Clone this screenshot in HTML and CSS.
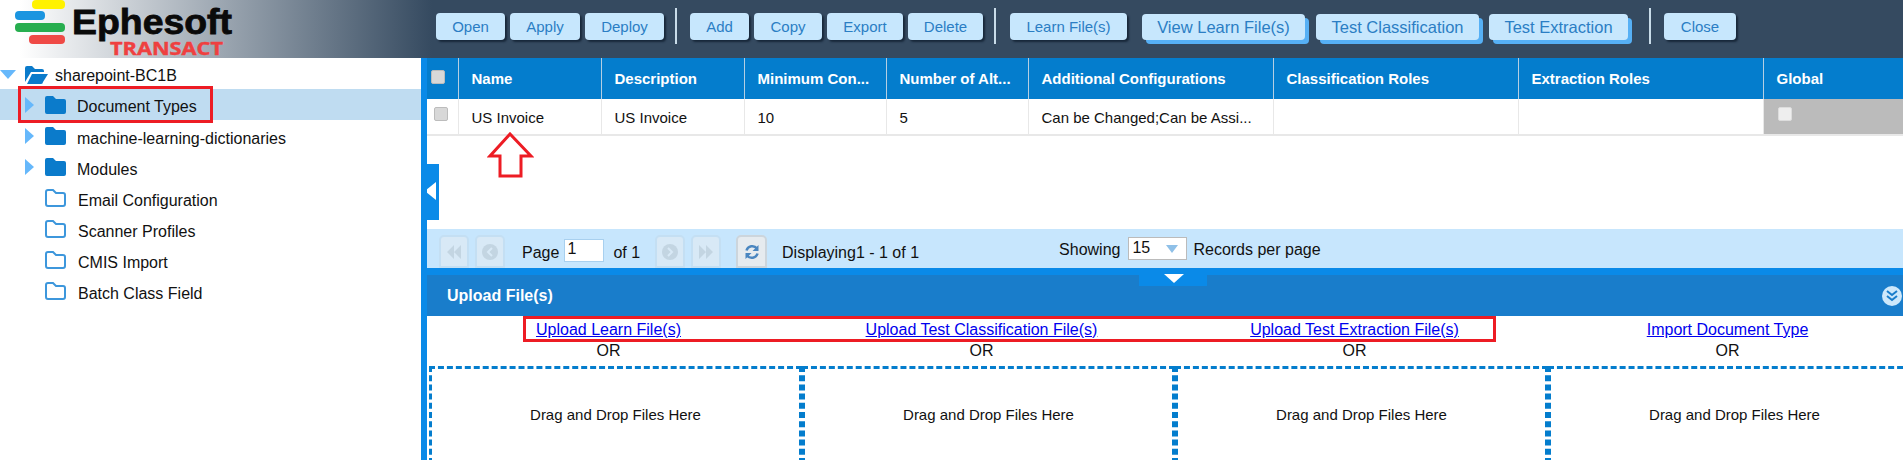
FILE: index.html
```html
<!DOCTYPE html>
<html lang="en">
<head>
<meta charset="utf-8">
<title>Ephesoft Transact</title>
<link rel="stylesheet" href="styles.css">
</head>
<body>
<div class="app">
  <header class="header">
    <svg class="logo" width="240" height="58" viewBox="0 0 240 58">
      <rect x="32" y="0" width="33" height="9" rx="4" fill="#fff200"/>
      <rect x="15" y="11" width="30" height="9" rx="4" fill="#1b95e0"/>
      <rect x="15" y="23" width="50" height="9" rx="4" fill="#27ae4f"/>
      <rect x="29" y="35" width="36" height="9" rx="4" fill="#ef4a46"/>
      <text x="72" y="34" class="logo-main" textLength="160" lengthAdjust="spacingAndGlyphs">Ephesoft</text>
      <text x="110" y="55" class="logo-sub" textLength="113" lengthAdjust="spacingAndGlyphs">TRANSACT</text>
    </svg>
    <nav class="toolbar">
      <button class="btn">Open</button>
      <button class="btn">Apply</button>
      <button class="btn">Deploy</button>
      <span class="sep"></span>
      <button class="btn">Add</button>
      <button class="btn">Copy</button>
      <button class="btn">Export</button>
      <button class="btn">Delete</button>
      <span class="sep sep-mid"></span>
      <button class="btn">Learn File(s)</button>
      <button class="btn btn-tab btn-first">View Learn File(s)</button>
      <button class="btn btn-tab">Test Classification</button>
      <button class="btn btn-tab">Test Extraction</button>
      <span class="sep sep-wide"></span>
      <button class="btn">Close</button>
    </nav>
  </header>
  <div class="main">
    <aside class="sidebar">
      <div class="row row-root">
        <svg class="caret-down" width="16" height="9" viewBox="0 0 16 9"><path d="M0 0h16L8 9z"/></svg>
        <svg class="folder-open" width="24" height="18" viewBox="0 0 24 18"><path d="M1 16V2a2 2 0 0 1 2-2h5l3 3h7a2 2 0 0 1 2 2v1H7L1 16z"/><path d="M8 8h16l-5 8a2 2 0 0 1-2 2H3z"/></svg>
        <span>sharepoint-BC1B</span>
      </div>
      <div class="row row-sel row-branch">
        <svg class="caret" width="9" height="16" viewBox="0 0 9 16"><path d="M0 0l9 8-9 8z"/></svg>
        <svg class="folder" width="21" height="18" viewBox="0 0 21 18"><path d="M2 0h6l3 3h8a2 2 0 0 1 2 2v11a2 2 0 0 1-2 2H2a2 2 0 0 1-2-2V2a2 2 0 0 1 2-2z"/></svg>
        <span>Document Types</span>
        <span class="mark-tree"></span>
      </div>
      <div class="row row-branch">
        <svg class="caret" width="9" height="16" viewBox="0 0 9 16"><path d="M0 0l9 8-9 8z"/></svg>
        <svg class="folder" width="21" height="18" viewBox="0 0 21 18"><path d="M2 0h6l3 3h8a2 2 0 0 1 2 2v11a2 2 0 0 1-2 2H2a2 2 0 0 1-2-2V2a2 2 0 0 1 2-2z"/></svg>
        <span>machine-learning-dictionaries</span>
      </div>
      <div class="row row-branch">
        <svg class="caret" width="9" height="16" viewBox="0 0 9 16"><path d="M0 0l9 8-9 8z"/></svg>
        <svg class="folder" width="21" height="18" viewBox="0 0 21 18"><path d="M2 0h6l3 3h8a2 2 0 0 1 2 2v11a2 2 0 0 1-2 2H2a2 2 0 0 1-2-2V2a2 2 0 0 1 2-2z"/></svg>
        <span>Modules</span>
      </div>
      <div class="row row-leaf">
        <svg class="folder-line" width="21" height="18" viewBox="0 0 21 18"><path d="M3 1h5l3 3h7a2 2 0 0 1 2 2v9a2 2 0 0 1-2 2H3a2 2 0 0 1-2-2V3a2 2 0 0 1 2-2z"/></svg>
        <span>Email Configuration</span>
      </div>
      <div class="row row-leaf">
        <svg class="folder-line" width="21" height="18" viewBox="0 0 21 18"><path d="M3 1h5l3 3h7a2 2 0 0 1 2 2v9a2 2 0 0 1-2 2H3a2 2 0 0 1-2-2V3a2 2 0 0 1 2-2z"/></svg>
        <span>Scanner Profiles</span>
      </div>
      <div class="row row-leaf">
        <svg class="folder-line" width="21" height="18" viewBox="0 0 21 18"><path d="M3 1h5l3 3h7a2 2 0 0 1 2 2v9a2 2 0 0 1-2 2H3a2 2 0 0 1-2-2V3a2 2 0 0 1 2-2z"/></svg>
        <span>CMIS Import</span>
      </div>
      <div class="row row-leaf">
        <svg class="folder-line" width="21" height="18" viewBox="0 0 21 18"><path d="M3 1h5l3 3h7a2 2 0 0 1 2 2v9a2 2 0 0 1-2 2H3a2 2 0 0 1-2-2V3a2 2 0 0 1 2-2z"/></svg>
        <span>Batch Class Field</span>
      </div>
    </aside>
    <div class="divider"></div>
    <section class="content">
      <div class="grid-wrap">
        <table class="grid">
          <colgroup>
            <col class="c-check"><col class="c-std"><col class="c-std"><col class="c-std2"><col class="c-std2"><col class="c-wide"><col class="c-wide"><col class="c-wide"><col>
          </colgroup>
          <thead>
            <tr>
              <th class="cell-check"><span class="check check-head"></span></th>
              <th>Name</th><th>Description</th><th>Minimum Con...</th><th>Number of Alt...</th>
              <th>Additional Configurations</th><th>Classification Roles</th><th>Extraction Roles</th><th>Global</th>
            </tr>
          </thead>
          <tbody>
            <tr>
              <td class="cell-check"><span class="check check-row"></span></td>
              <td>US Invoice</td><td>US Invoice</td><td>10</td><td>5</td>
              <td>Can be Changed;Can be Assi...</td><td></td><td></td>
              <td class="cell-global"><span class="check check-global"></span></td>
            </tr>
          </tbody>
        </table>
        <svg class="up-arrow" width="47" height="46" viewBox="0 0 47 46"><path d="M23 2L3 24h10v20h21V24h10z"/></svg>
        <div class="side-handle"><span class="tri-left"></span></div>
      </div>
      <div class="pager">
        <span class="pg-btn"><svg width="16" height="14" viewBox="0 0 16 14"><path d="M8 0v14L1 7zM15 0v14L8 7z"/></svg></span>
        <span class="pg-btn"><svg width="16" height="16" viewBox="0 0 16 16"><circle cx="8" cy="8" r="8"/><path class="pg-chev" d="M10 4L6 8l4 4"/></svg></span>
        <span class="pg-label">Page</span>
        <input class="pg-input" value="1" aria-label="Page">
        <span class="pg-of">of 1</span>
        <span class="pg-btn pg-next"><svg width="16" height="16" viewBox="0 0 16 16"><circle cx="8" cy="8" r="8"/><path class="pg-chev" d="M6 4l4 4-4 4"/></svg></span>
        <span class="pg-btn"><svg width="16" height="14" viewBox="0 0 16 14"><path d="M1 0v14l7-7zM8 0v14l7-7z"/></svg></span>
        <span class="pg-btn pg-refresh"><svg width="16" height="16" viewBox="0 0 16 16"><path class="ref" d="M2.500 6.500A6 6 0 0 1 13 4.500M13.500 9.500A6 6 0 0 1 3 11.500"/><path class="ref-head" d="M14.500 1v6h-6zM1.500 15V9h6z"/></svg></span>
        <span class="pg-display">Displaying1 - 1 of 1</span>
        <span class="pg-show">Showing</span>
        <span class="pg-select">15<i class="sel-tri"></i></span>
        <span class="pg-rec">Records per page</span>
      </div>
      <div class="upload-bar">
        <strong>Upload File(s)</strong>
        <svg class="collapse" width="20" height="20" viewBox="0 0 20 20"><circle cx="10" cy="10" r="10"/><path d="M5 5l5 4 5-4M5 10l5 4 5-4"/></svg>
        <div class="bottom-handle"><span class="tri-down"></span></div>
      </div>
      <div class="links">
        <div class="link-cell"><a href="#">Upload Learn File(s)</a><span>OR</span></div>
        <div class="link-cell"><a href="#">Upload Test Classification File(s)</a><span>OR</span></div>
        <div class="link-cell"><a href="#">Upload Test Extraction File(s)</a><span>OR</span></div>
        <div class="link-cell"><a href="#">Import Document Type</a><span>OR</span></div>
        <span class="mark-links"></span>
      </div>
      <div class="drops">
        <div class="drop">Drag and Drop Files Here</div>
        <div class="drop">Drag and Drop Files Here</div>
        <div class="drop">Drag and Drop Files Here</div>
        <div class="drop">Drag and Drop Files Here</div>
      </div>
    </section>
  </div>
</div>
</body>
</html>
```

FILE: styles.css
```css
* { box-sizing: border-box; }
html, body { margin: 0; height: 460px; overflow: hidden; background: #fff; }
body { font-family: "Liberation Sans", Arial, sans-serif; font-size: 15px; color: #111; }
.app { width: 1903px; height: 460px; overflow: hidden; }

.header { height: 58px; display: flex; background: linear-gradient(to right, #fff 0, #fff 20px, #354a60 432px, #354a60 100%); }
.logo { flex: none; width: 240px; }
.logo-main { font: 700 35px "Liberation Sans", sans-serif; fill: #0a0a0a; stroke: #0a0a0a; stroke-width: 0.8px; }
.logo-sub { font: 700 17px "Open Sans", "Liberation Sans", sans-serif; fill: #ef4040; stroke: #ef4040; stroke-width: 0.4px; }

.toolbar { margin-left: 196px; display: flex; align-items: flex-start; padding-top: 13px; }
.btn { height: 27px; padding: 0; border: 0; border-radius: 4px; background: #c7e7fd; color: #2b7ec4; font: 15px "Liberation Sans", sans-serif; box-shadow: 2px 2px 2px #18283a; margin-right: 5px; }
.btn:nth-child(1) { width: 69px; }
.btn:nth-child(2) { width: 70px; }
.btn:nth-child(3) { width: 79px; }
.btn:nth-child(5) { width: 59px; }
.btn:nth-child(6) { width: 68px; }
.btn:nth-child(7) { width: 76px; }
.btn:nth-child(8) { width: 75px; }
.btn:nth-child(10) { width: 117px; margin-right: 0; }
.btn-tab { margin-top: 1px; height: 26px; width: 163px; margin-right: 11px; box-shadow: 4px 4px 0 #56b0f5; font-size: 16.500px; }
.btn-first { margin-left: 15px; }
.btn:nth-child(12) { width: 163px; margin-right: 10px; }
.btn:nth-child(13) { width: 139px; margin-right: 0; }
.btn:last-child { width: 72px; margin-right: 0; box-shadow: 2px 2px 2px #18283a; }
.sep { width: 2px; height: 36px; margin: -5px 13px 0 6px; background: #c9dce9; }
.sep-mid { margin-right: 14px; }
.sep-wide { margin-left: 21px; margin-right: 13px; }

.main { display: flex; height: 402px; }
.sidebar { flex: none; width: 421px; padding-top: 0; }
.row { height: 31px; display: flex; align-items: center; font-size: 16px; position: relative; }
.row span:not(.mark-tree) { padding-top: 6px; }
.row-root span:not(.mark-tree), .row-sel span:not(.mark-tree) { padding-top: 4px; }
.row-root { padding-left: 0; }
.row-sel { background: #bfdcf1; }
.row-branch { padding-left: 25px; }
.row-leaf { padding-left: 45px; }
.caret-down path, .caret path { fill: #66b8fb; }
.caret-down { margin-right: 8px; margin-top: 2px; }
.folder-open { margin-right: 7px; margin-top: 2px; }
.folder-open path { fill: #0b7bcb; }
.caret { margin-right: 11px; }
.folder { margin-right: 11px; }
.folder path { fill: #0b7bcb; }
.folder-line { margin-right: 12px; }
.folder-line path { fill: none; stroke: #3d97dc; stroke-width: 2; }
.mark-tree { position: absolute; left: 18px; top: -3px; width: 195px; height: 37px; border: 3px solid #ed1c24; }

.divider { flex: none; width: 6px; background: #0a8ae8; }
.content { flex: none; width: 1476px; overflow: hidden; position: relative; }

.grid-wrap { height: 171px; position: relative; }
.grid { border-collapse: collapse; table-layout: fixed; width: 1476px; }
.c-check { width: 31px; }
.c-std { width: 143px; }
.c-std2 { width: 142px; }
.c-wide { width: 245px; }
.grid th { height: 41px; background: #047dcd; color: #fff; font-size: 15px; font-weight: 700; text-align: left; padding: 0 0 0 13px; border-right: 1px solid #b5cfe3; white-space: nowrap; overflow: hidden; }
.grid th:last-child { border-right: 0; }
.grid td { height: 36px; font-size: 15px; padding: 2px 0 0 13px; border-right: 1px solid #e8e8e8; border-bottom: 2px solid #e8e8e8; white-space: nowrap; overflow: hidden; }
.grid .cell-check { padding: 0; vertical-align: top; }
.grid td:last-child { border-right: 0; }
.grid .cell-global { background: #bbb; padding: 0 0 0 14px; vertical-align: top; border-bottom-color: #e8e8e8; }
.check { display: block; width: 14px; height: 14px; border-radius: 2px; background: #d8d8d8; border: 1px solid #bcbcbc; }
.check-head { margin: 12px 0 0 4px; }
.check-row { margin: 8px 0 0 7px; }
.check-global { margin-top: 8px; background: #eee; border-color: #ddd; }
.up-arrow { position: absolute; left: 60px; top: 74px; }
.up-arrow path { fill: #fff; stroke: #ed1c24; stroke-width: 3; }
.side-handle { position: absolute; left: 0; top: 106px; width: 12px; height: 56px; background: #0a8ae8; }
.tri-left { position: absolute; left: -2px; top: 18px; border-right: 11px solid #fff; border-top: 9px solid transparent; border-bottom: 9px solid transparent; }

.pager { height: 39px; background: #c7e6fd; display: flex; align-items: center; font-size: 16px; padding-left: 12px; position: relative; }
.pg-btn { flex: none; width: 30px; height: 33px; margin: 6px 6px 0 0; display: flex; align-items: center; justify-content: center; border: 2px solid #c4dff3; border-radius: 5px 5px 0 0; background: #d8e9f6; }
.pg-btn svg path, .pg-btn svg circle { fill: #c3d5e2; }
.pg-btn svg .pg-chev { fill: none; stroke: #d8e9f6; stroke-width: 2; }
.pg-label { margin: 9px 0 0 11px; }
.pg-input { width: 40px; height: 23px; margin: 4px 9px 0 5px; padding: 0 0 4px 2px; border: 1px solid #a8d0ef; font: 16px "Liberation Sans", sans-serif; color: #111; }
.pg-of { margin: 9px 15px 0 0; }
.pg-next { width: 30px; }
.pg-refresh { margin-left: 9px; background: #e6ebef; border-color: #ccd5dc; width: 31px; margin-right: 15px; }
.pg-btn svg .ref { fill: none; stroke: #4a86c0; stroke-width: 2.500; }
.pg-btn svg .ref-head { fill: #4a86c0; }
.pg-display { margin-top: 9px; width: 277px; flex: none; }
.pg-show { margin-top: 2px; }
.pg-select { width: 59px; height: 23px; margin: 0 6px 0 8px; padding-left: 3px; background: #fff; border: 1px solid #bbb; position: relative; line-height: 20px; }
.sel-tri { position: absolute; right: 8px; top: 7px; border-top: 8px solid #8fc0e8; border-left: 6px solid transparent; border-right: 6px solid transparent; }
.pg-rec { margin-top: 2px; }

.upload-bar { height: 48px; border-top: 7px solid #0a8ae8; background: #197dcb; color: #fff; display: flex; align-items: center; justify-content: space-between; padding: 0 1px 0 20px; position: relative; font-size: 16px; }
.upload-bar strong { font-size: 16px; }
.collapse circle { fill: #cde8fb; }
.collapse path { fill: none; stroke: #197dcb; stroke-width: 2; }
.bottom-handle { position: absolute; left: 712px; top: 0; width: 68px; height: 11px; background: #0a8ae8; }
.tri-down { position: absolute; left: 25px; top: -1px; border-top: 9px solid #fff; border-left: 10px solid transparent; border-right: 10px solid transparent; }

.links { height: 50px; margin-left: -5px; display: grid; grid-template-columns: repeat(4, 373px); position: relative; width: 1492px; font-size: 16px; }
.link-cell { display: flex; flex-direction: column; align-items: center; padding-top: 5px; }
.link-cell a { color: #0000ee; line-height: 18px; }
.link-cell span { line-height: 18px; margin-top: 3px; }
.mark-links { position: absolute; left: 101px; top: 0; width: 973px; height: 26px; border: 3px solid #ed1c24; }

.drops { display: flex; margin-left: 2px; }
.drop { flex: none; width: 373px; height: 98px; margin-right: 0; border: 3px dashed #047dcd; border-bottom: 0; display: flex; justify-content: center; align-items: center; font-size: 15px; padding-bottom: 5px; }
```
